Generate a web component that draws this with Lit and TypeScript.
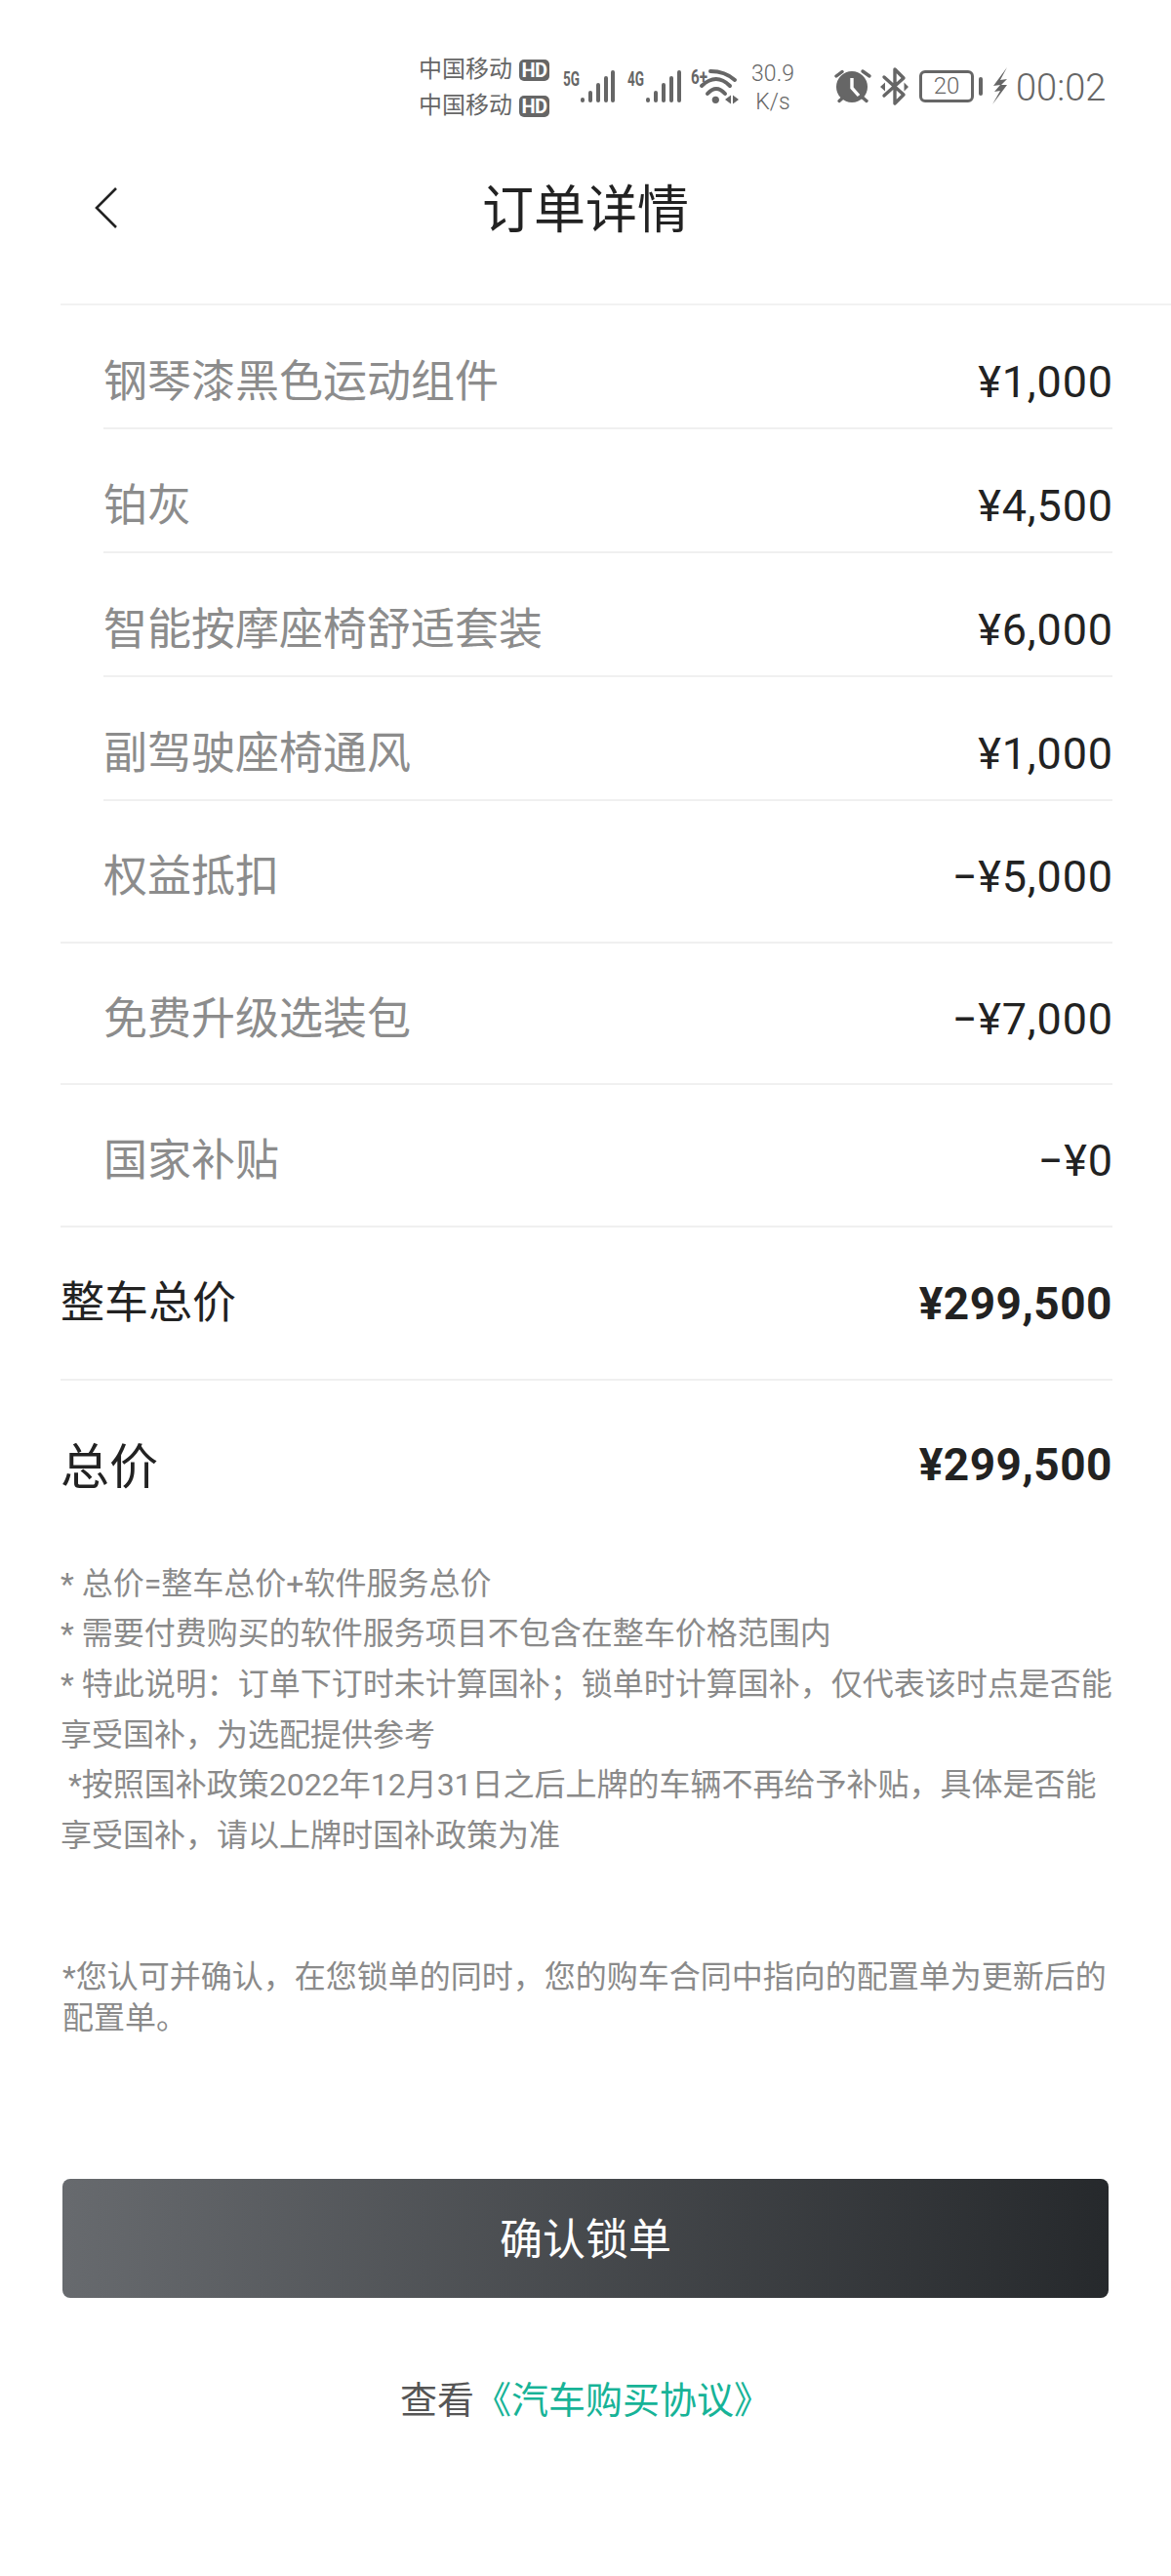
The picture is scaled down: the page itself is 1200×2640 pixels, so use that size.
import { LitElement, html, css, svg } from "lit";
import { customElement } from "lit/decorators.js";

const bars = (cx: number[]) => {
  const tops = [30, 23, 15, 8, 2];
  return cx.map((c, i) => svg`<rect x=${c - 2} y=${tops[i]} width="4" height=${35 - tops[i]} rx="2"></rect>`);
};

const plain: [string, string][] = [
  ["钢琴漆黑色运动组件", "¥1,000"],
  ["铂灰", "¥4,500"],
  ["智能按摩座椅舒适套装", "¥6,000"],
  ["副驾驶座椅通风", "¥1,000"],
];
const discounts: [string, string][] = [
  ["权益抵扣", "−¥5,000"],
  ["免费升级选装包", "−¥7,000"],
  ["国家补贴", "−¥0"],
];

@customElement("app-root")
export class AppRoot extends LitElement {
  static styles = css`
    :host {
      display: block;
      width: 1200px;
      min-height: 2640px;
      background: #fff;
      font-family: Roboto, "Noto Sans CJK SC", sans-serif;
      color: #222;
    }
    .status {
      display: flex;
      align-items: flex-start;
      height: 130px;
      padding-left: 429px;
      box-sizing: border-box;
      color: #666;
      fill: #666;
    }
    .carrier { width: 135px; margin-top: 53px; }
    .carrier-line { display: flex; align-items: center; height: 37px; font-size: 24px; line-height: 37px; }
    .hd {
      margin-left: 7px;
      width: 31px;
      height: 22px;
      border-radius: 5px;
      background: #666;
      color: #fff;
      font-size: 20px;
      font-weight: 700;
      line-height: 22px;
      text-align: center;
      letter-spacing: -0.5px;
    }
    svg { display: block; flex: none; }
    .tag { font-family: Roboto, sans-serif; font-size: 20px; font-weight: 700; }
    .sig1 { margin: 70px 0 0 13px; }
    .sig2 { margin: 70px 0 0 10px; }
    .wifi { margin: 68px 0 0 9px; }
    .speed {
      margin: 61px 0 0 8px;
      width: 48px;
      font-size: 23px;
      font-weight: 300;
      line-height: 29px;
      text-align: center;
    }
    .alarm { margin: 68px 0 0 39px; }
    .bt { margin: 68px 0 0 5px; }
    .battery {
      margin: 72px 0 0 10px;
      width: 56px;
      height: 33px;
      box-sizing: border-box;
      border: 3px solid #666;
      border-radius: 6px;
      font-size: 24px;
      font-weight: 300;
      line-height: 27px;
      text-align: center;
    }
    .nub { margin: 79px 0 0 5px; width: 4px; height: 19px; border-radius: 2px; background: #666; }
    .bolt { margin: 69px 0 0 10px; }
    .time { margin: 68px 0 0 8px; font-size: 38px; font-weight: 300; line-height: 44px; }

    .nav {
      display: grid;
      grid-template-columns: 1fr auto 1fr;
      align-items: center;
      height: 74px;
      margin-top: 49px;
      margin-bottom: 58px;
    }
    .nav svg { margin: 0 0 6px 96px; fill: none; stroke: #222; stroke-width: 2.6; }
    .title { font-size: 53px; line-height: 74px; color: #222; }
    .rule { margin-left: 62px; height: 2px; background: #f2f2f2; }

    .row {
      display: flex;
      justify-content: space-between;
      align-items: center;
      border-bottom: 2px solid #f0f0f0;
      font-size: 45px;
      line-height: 62px;
    }
    .label { color: #8c8c8c; }
    .value { font-size: 45px; letter-spacing: 0.85px; margin-right: -1px; }
    .item { margin: 0 60px 0 106px; padding: 47.5px 0 15.5px; }
    .disc { margin: 0 60px 0 62px; padding: 47px 0 34.6px 44px; }
    .sum { margin: 0 60px 0 62px; padding: 47px 0 46px; }
    .total {
      display: flex;
      justify-content: space-between;
      align-items: center;
      margin: 0 60px 0 62px;
      padding-top: 54px;
    }
    .total .name { font-size: 50px; line-height: 70px; }
    .strong { font-size: 46px; font-weight: 700; letter-spacing: 0.5px; line-height: 62px; color: #222; }
    .total .strong { padding-bottom: 6px; }

    .notes {
      margin: 59px 59px 0 62px;
      font-size: 32px;
      line-height: 51.6px;
      color: #8a8a8a;
    }
    .confirm {
      margin: 98px 62px 0 64px;
      font-size: 32px;
      line-height: 42px;
      color: #8a8a8a;
    }
    .btn {
      display: block;
      box-sizing: border-box;
      width: 1072px;
      height: 122px;
      margin: 144px 0 0 64px;
      padding: 4px 0 0;
      border: 0;
      border-radius: 8px;
      background: linear-gradient(90deg, #676a6e, #26292c);
      color: #fff;
      font: inherit;
      font-size: 44px;
      line-height: 118px;
      text-align: center;
    }
    .agree {
      margin-top: 80px;
      font-size: 38px;
      line-height: 50px;
      text-align: center;
      color: #555;
    }
    .agree a { color: #17b397; text-decoration: none; }
  `;

  private carrierLine() {
    return html`<div class="carrier-line"><span>中国移动</span><span class="hd">HD</span></div>`;
  }

  render() {
    return html`
      <div class="status">
        <div class="carrier">${this.carrierLine()}${this.carrierLine()}</div>
        <svg class="sig1" width="56" height="40" viewBox="0 0 56 40">
          <text class="tag" x="0" y="18" textLength="17" lengthAdjust="spacingAndGlyphs">5G</text>
          ${bars([20, 28, 36, 44, 51])}
        </svg>
        <svg class="sig2" width="56" height="40" viewBox="0 0 56 40">
          <text class="tag" x="0" y="18" textLength="17" lengthAdjust="spacingAndGlyphs">4G</text>
          ${bars([21, 29, 37, 45, 53])}
        </svg>
        <svg class="wifi" width="52" height="44" viewBox="0 0 52 44">
          <text class="tag" x="0" y="18" textLength="17" lengthAdjust="spacingAndGlyphs">6+</text>
          <g fill="none" stroke="#666" stroke-width="4" stroke-linecap="round">
            <path d="M20 5 Q35 5 45 14"></path>
            <path d="M11 20 Q26 6 40 20"></path>
            <path d="M17 28 Q26 18 35 28"></path>
          </g>
          <circle cx="25.3" cy="34.3" r="3.6"></circle>
          <path d="M35 34 L41 29.5 V38.5Z M49 34 L43 29.5 V38.5Z"></path>
        </svg>
        <div class="speed">30.9<br />K/s</div>
        <svg class="alarm" width="40" height="40" viewBox="0 0 40 40">
          <circle cx="18" cy="21" r="16"></circle>
          <g fill="none" stroke="#666" stroke-width="3.4" stroke-linecap="round">
            <path d="M2 10 L8 5.5"></path>
            <path d="M29 5 L36 10"></path>
            <path d="M5 35.5 L9 32"></path>
            <path d="M33 35.5 L29 32"></path>
          </g>
          <path d="M18 12 V22 L25 30" fill="none" stroke="#fff" stroke-width="3.4"></path>
        </svg>
        <svg class="bt" width="32" height="42" viewBox="0 0 32 42">
          <path d="M6 11 L26 29 L17 38 V3 L26 12 L6 30" fill="none" stroke="#666" stroke-width="3.4" stroke-linejoin="round" stroke-linecap="round"></path>
          <path d="M2 21 L7 16.5 V25.5Z M31 21 L26.5 16.5 V25.5Z"></path>
        </svg>
        <div class="battery">20</div>
        <div class="nub"></div>
        <svg class="bolt" width="16" height="38" viewBox="0 0 16 38">
          <path d="M15 0 L1 19 L8 18 L2 25 L8 24 L0 38 L15 18 L9 18 L15 12 L8 13Z"></path>
        </svg>
        <div class="time">00:02</div>
      </div>

      <div class="nav">
        <svg width="30" height="44" viewBox="0 0 30 44"><path d="M23 2 L3 22 L23 42"></path></svg>
        <div class="title">订单详情</div>
        <div></div>
      </div>
      <div class="rule"></div>

      ${plain.map(
        ([l, v]) => html`<div class="row item"><span class="label">${l}</span><span class="value">${v}</span></div>`
      )}
      ${discounts.map(
        ([l, v]) => html`<div class="row disc"><span class="label">${l}</span><span class="value">${v}</span></div>`
      )}
      <div class="row sum"><span>整车总价</span><span class="strong">¥299,500</span></div>
      <div class="total"><span class="name">总价</span><span class="strong">¥299,500</span></div>

      <div class="notes">
        * 总价=整车总价+软件服务总价<br />
        * 需要付费购买的软件服务项目不包含在整车价格范围内<br />
        * 特此说明：订单下订时未计算国补；锁单时计算国补，仅代表该时点是否能享受国补，为选配提供参考<br />
        &nbsp;*按照国补政策2022年12月31日之后上牌的车辆不再给予补贴，具体是否能享受国补，请以上牌时国补政策为准
      </div>
      <div class="confirm">*您认可并确认，在您锁单的同时，您的购车合同中指向的配置单为更新后的配置单。</div>
      <button class="btn">确认锁单</button>
      <div class="agree">查看<a>《汽车购买协议》</a></div>
    `;
  }
}
